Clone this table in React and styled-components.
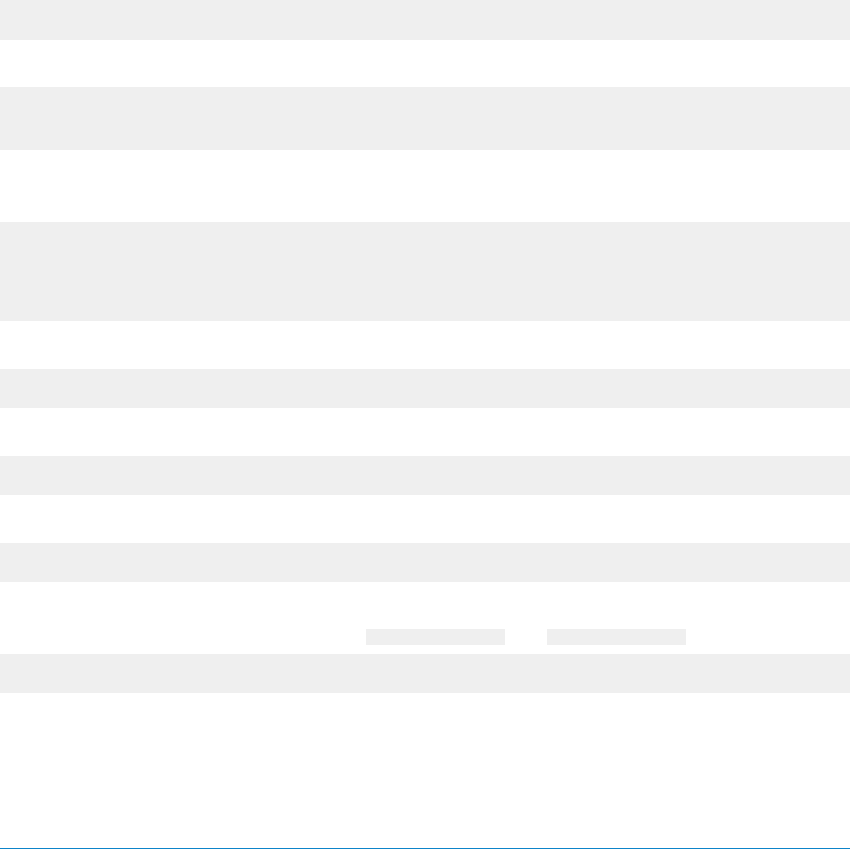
import React from "react";
import styled, { createGlobalStyle } from "styled-components";

const GlobalStyle = createGlobalStyle`
  html, body {
    margin: 0;
    padding: 0;
    background: #ffffff;
    font-family: "Liberation Sans", Arial, sans-serif;
  }
`;

const StyledPage = styled.div`
  width: 100%;
  height: 849px;
  display: flex;
  flex-direction: column;
  background: #ffffff;
  overflow: hidden;
`;

const StyledBar = styled.div`
  width: 100%;
  height: ${({ h }) => h}px;
  flex-shrink: 0;
  margin-top: ${({ gap }) => gap || 0}px;
  background-color: #efefef;
`;

const StyledPair = styled.div`
  display: flex;
  gap: 42px;
  padding-left: 366px;
  margin-top: ${({ gap }) => gap}px;
`;

const StyledPill = styled.div`
  width: 139px;
  height: 16px;
  background-color: #efefef;
`;

const StyledFooter = styled.footer`
  margin-top: auto;
  flex-shrink: 0;
  height: 1px;
  background-color: #0d84c9;
`;

const rows = [
  { h: 40, gap: 0 },
  { h: 63, gap: 47 },
  { h: 99, gap: 72 },
  { h: 39, gap: 48 },
  { h: 39, gap: 48 },
  { h: 39, gap: 48 },
];

const App = () => {
  return (
    <>
      <GlobalStyle />
      <StyledPage>
        {rows.map((row, i) => (
          <StyledBar key={i} h={row.h} gap={row.gap} />
        ))}
        <StyledPair gap={47}>
          <StyledPill />
          <StyledPill />
        </StyledPair>
        <StyledBar h={39} gap={9} />
        <StyledFooter />
      </StyledPage>
    </>
  );
};

export default App;
